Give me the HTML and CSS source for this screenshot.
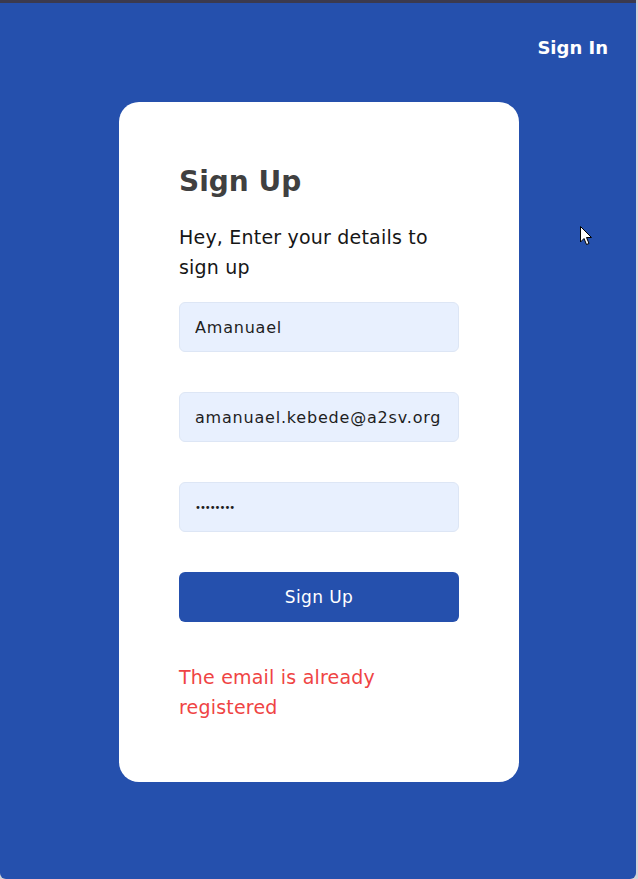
FILE: index.html
```html
<!DOCTYPE html>
<html lang="en">
<head>
<meta charset="utf-8">
<title>Sign Up</title>
<link rel="stylesheet" href="styles.css">
</head>
<body>
<div class="window">
  <header class="topbar">
    <a class="signin" href="#">Sign In</a>
  </header>
  <main class="main">
    <section class="card">
      <h1 class="title">Sign Up</h1>
      <p class="subtitle">Hey, Enter your details to sign up</p>
      <form class="form">
        <input class="field" type="text" value="Amanuael">
        <input class="field" type="email" value="amanuael.kebede@a2sv.org">
        <input class="field pw" type="password" value="password">
        <button class="submit" type="button">Sign Up</button>
      </form>
      <p class="error">The email is already registered</p>
    </section>
  </main>
  <svg class="cursor" width="13" height="20" viewBox="0 0 13 20"><path d="M0.5 0.5 L0.5 16 L4 12.5 L6.5 18.5 L9 17.5 L6.5 11.5 L11.5 11.5 Z" fill="#fff" stroke="#000" stroke-width="1"/></svg>
</div>
</body>
</html>
```
FILE: styles.css
```css
* { box-sizing: border-box; }
html, body { margin: 0; padding: 0; }
body {
  width: 638px;
  height: 879px;
  background: #d4d4d8;
  font-family: "DejaVu Sans", "Open Sans", sans-serif;
  overflow: hidden;
}
.window {
  position: relative;
  width: 636px;
  height: 879px;
  background: #2550ad;
  border-top: 3px solid #3b3a4f;
  border-radius: 0 0 6px 6px;
  display: flex;
  flex-direction: column;
}
.topbar {
  display: flex;
  justify-content: flex-end;
  padding: 34px 28px 0 0;
  height: 99px;
}
.signin {
  color: #fff;
  text-decoration: none;
  font-weight: 700;
  font-size: 18px;
  line-height: 22px;
}
.main {
  display: flex;
  justify-content: center;
  padding-left: 2px;
}
.card {
  width: 400px;
  height: 680px;
  background: #fff;
  border-radius: 20px;
  padding: 60px 60px;
  display: flex;
  flex-direction: column;
}
.title {
  margin: 0;
  font-size: 28px;
  line-height: 40px;
  font-weight: 700;
  color: #404040;
}
.subtitle {
  margin: 20px 0 0;
  font-size: 19px;
  line-height: 30px;
  color: #161616;
  letter-spacing: 0.2px;
  max-width: 265px;
}
.form {
  margin-top: 20px;
  display: flex;
  flex-direction: column;
  gap: 40px;
}
.field {
  height: 50px;
  width: 280px;
  border: 1px solid #dde6f5;
  background: #e8f0fe;
  border-radius: 6px;
  padding: 0 15px;
  font-family: inherit;
  font-size: 16px;
  letter-spacing: 0.8px;
  color: #1e1e1e;
  outline: none;
}
.pw {
  font-size: 10px;
  letter-spacing: -1px;
}
.submit {
  height: 50px;
  width: 280px;
  border: none;
  border-radius: 6px;
  background: #2550ad;
  color: #fff;
  font-family: inherit;
  font-size: 17px;
  letter-spacing: 0.4px;
  font-weight: 500;
}
.error {
  margin: 40px 0 0;
  font-size: 19px;
  line-height: 30px;
  color: #ef4444;
  letter-spacing: 0.2px;
  max-width: 215px;
}
.cursor {
  position: absolute;
  left: 580px;
  top: 223px;
}
```
